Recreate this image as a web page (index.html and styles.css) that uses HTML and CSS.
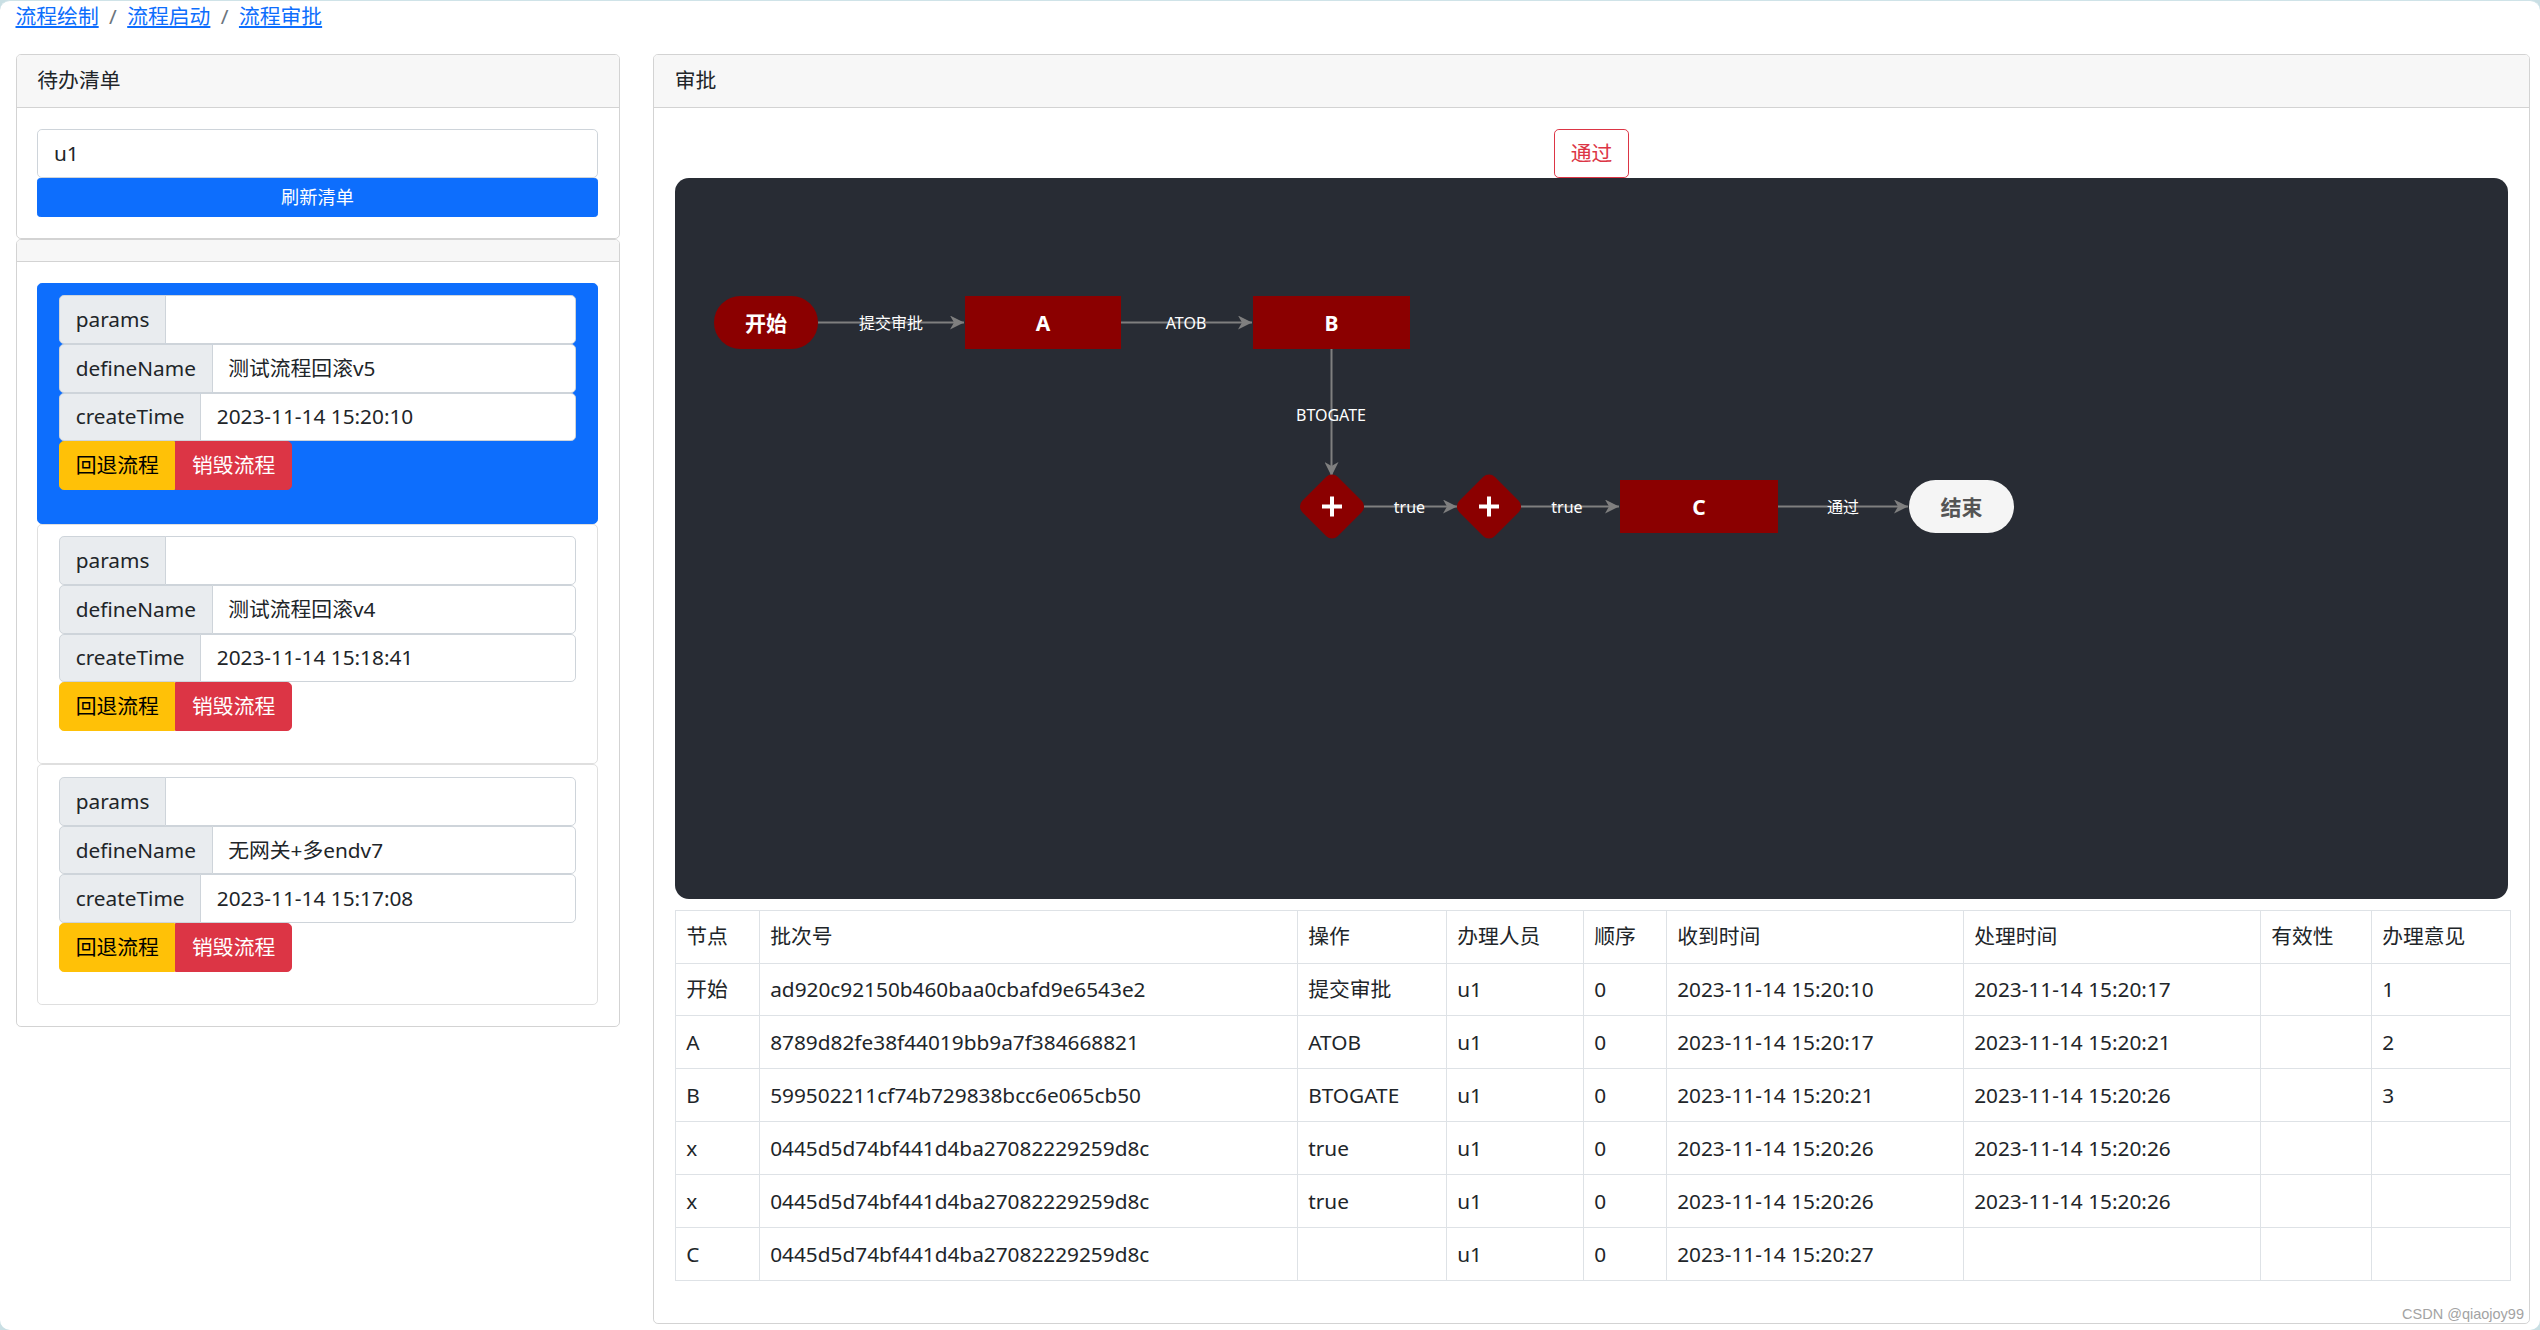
FILE: index.html
```html
<!DOCTYPE html>
<html lang="zh-CN">
<head>
<meta charset="utf-8">
<title>流程审批</title>
<link rel="stylesheet" href="styles.css">
</head>
<body>
<div class="window">
  <nav class="crumbs">
    <a href="#" class="crumb">流程绘制</a><span class="sep">/</span>
    <a href="#" class="crumb">流程启动</a><span class="sep">/</span>
    <a href="#" class="crumb">流程审批</a>
  </nav>
  <div class="layout">
    <aside class="side">
      <section class="card">
        <div class="card-header">待办清单</div>
        <div class="card-body">
          <div class="field">u1</div>
          <button class="btn-refresh">刷新清单</button>
        </div>
      </section>
      <section class="card">
        <div class="card-header empty"></div>
        <div class="card-body list">
          <div class="item active">
            <div class="igroup"><span class="ig-label">params</span><div class="ig-value"></div></div>
            <div class="igroup"><span class="ig-label">defineName</span><div class="ig-value">测试流程回滚v5</div></div>
            <div class="igroup"><span class="ig-label">createTime</span><div class="ig-value">2023-11-14 15:20:10</div></div>
            <div class="btns"><button class="btn warn">回退流程</button><button class="btn danger">销毁流程</button></div>
          </div>
          <div class="item">
            <div class="igroup"><span class="ig-label">params</span><div class="ig-value"></div></div>
            <div class="igroup"><span class="ig-label">defineName</span><div class="ig-value">测试流程回滚v4</div></div>
            <div class="igroup"><span class="ig-label">createTime</span><div class="ig-value">2023-11-14 15:18:41</div></div>
            <div class="btns"><button class="btn warn">回退流程</button><button class="btn danger">销毁流程</button></div>
          </div>
          <div class="item">
            <div class="igroup"><span class="ig-label">params</span><div class="ig-value"></div></div>
            <div class="igroup"><span class="ig-label">defineName</span><div class="ig-value">无网关+多endv7</div></div>
            <div class="igroup"><span class="ig-label">createTime</span><div class="ig-value">2023-11-14 15:17:08</div></div>
            <div class="btns"><button class="btn warn">回退流程</button><button class="btn danger">销毁流程</button></div>
          </div>
        </div>
      </section>
    </aside>
    <main class="card main">
      <div class="card-header">审批</div>
      <div class="card-body">
        <div class="center"><button class="btn-pass">通过</button></div>
        <div class="flow">
          <svg class="flow-svg" viewBox="0 0 1835 721" width="1835" height="721" xmlns="http://www.w3.org/2000/svg">
            <defs>
              <marker id="arr" viewBox="0 0 14 14" refX="14" refY="7" markerWidth="14" markerHeight="14" markerUnits="userSpaceOnUse" orient="auto">
                <path d="M0,0 L14,7 L0,14 L4,7 Z" fill="#7f7f7f"/>
              </marker>
            </defs>
            <g class="edges" stroke="#7f7f7f" stroke-width="2" fill="none">
              <line x1="143" y1="144.5" x2="289" y2="144.5" marker-end="url(#arr)"/>
              <line x1="446" y1="144.5" x2="577" y2="144.5" marker-end="url(#arr)"/>
              <line x1="656.5" y1="171" x2="656.5" y2="298" marker-end="url(#arr)"/>
              <line x1="689" y1="328.5" x2="782" y2="328.5" marker-end="url(#arr)"/>
              <line x1="846" y1="328.5" x2="944" y2="328.5" marker-end="url(#arr)"/>
              <line x1="1103" y1="328.5" x2="1233" y2="328.5" marker-end="url(#arr)"/>
            </g>
            <g class="elabels">
              <text x="216" y="144.5">提交审批</text>
              <text x="511" y="144.5">ATOB</text>
              <text x="656" y="237">BTOGATE</text>
              <text x="734.5" y="328.5">true</text>
              <text x="892" y="328.5">true</text>
              <text x="1168" y="328.5">通过</text>
            </g>
            <g class="nodes">
              <rect x="39" y="118" width="104" height="53" rx="26.5" fill="#8b0000"/>
              <rect x="290" y="118" width="156" height="53" fill="#8b0000"/>
              <rect x="578" y="118" width="157" height="53" fill="#8b0000"/>
              <rect x="-25" y="-25" width="50" height="50" rx="8" fill="#8b0000" transform="translate(657 328.5) rotate(45)"/>
              <rect x="-25" y="-25" width="50" height="50" rx="8" fill="#8b0000" transform="translate(814 328.5) rotate(45)"/>
              <rect x="945" y="302" width="158" height="53" fill="#8b0000"/>
              <rect x="1234" y="302" width="105" height="53" rx="26.5" fill="#f5f5f5"/>
              <path d="M647 328.5 H667 M657 318.5 V338.5 M804 328.5 H824 M814 318.5 V338.5" stroke="#fff" stroke-width="4"/>
            </g>
            <g class="ntext">
              <text x="91" y="145">开始</text>
              <text x="368" y="145">A</text>
              <text x="656.5" y="145">B</text>
              <text x="1024" y="329">C</text>
              <text x="1286.5" y="329" class="end-text">结束</text>
            </g>
          </svg>
        </div>
        <table class="grid">
          <colgroup>
            <col class="c1"><col class="c2"><col class="c3"><col class="c4"><col class="c5"><col class="c6"><col class="c7"><col class="c8"><col class="c9">
          </colgroup>
          <thead>
            <tr><th>节点</th><th>批次号</th><th>操作</th><th>办理人员</th><th>顺序</th><th>收到时间</th><th>处理时间</th><th>有效性</th><th>办理意见</th></tr>
          </thead>
          <tbody>
            <tr><td>开始</td><td>ad920c92150b460baa0cbafd9e6543e2</td><td>提交审批</td><td>u1</td><td>0</td><td>2023-11-14 15:20:10</td><td>2023-11-14 15:20:17</td><td></td><td>1</td></tr>
            <tr><td>A</td><td>8789d82fe38f44019bb9a7f384668821</td><td>ATOB</td><td>u1</td><td>0</td><td>2023-11-14 15:20:17</td><td>2023-11-14 15:20:21</td><td></td><td>2</td></tr>
            <tr><td>B</td><td>599502211cf74b729838bcc6e065cb50</td><td>BTOGATE</td><td>u1</td><td>0</td><td>2023-11-14 15:20:21</td><td>2023-11-14 15:20:26</td><td></td><td>3</td></tr>
            <tr><td>x</td><td>0445d5d74bf441d4ba27082229259d8c</td><td>true</td><td>u1</td><td>0</td><td>2023-11-14 15:20:26</td><td>2023-11-14 15:20:26</td><td></td><td></td></tr>
            <tr><td>x</td><td>0445d5d74bf441d4ba27082229259d8c</td><td>true</td><td>u1</td><td>0</td><td>2023-11-14 15:20:26</td><td>2023-11-14 15:20:26</td><td></td><td></td></tr>
            <tr><td>C</td><td>0445d5d74bf441d4ba27082229259d8c</td><td></td><td>u1</td><td>0</td><td>2023-11-14 15:20:27</td><td></td><td></td><td></td></tr>
          </tbody>
        </table>
      </div>
    </main>
  </div>
  <div class="watermark">CSDN @qiaojoy99</div>
</div>
</body>
</html>
```
FILE: styles.css
```css
html {
  background: #c9dfe4;
}
body {
  margin: 0;
  font-family: "Noto Sans", "Noto Sans CJK SC", sans-serif;
  font-size: 20.8px;
  line-height: 1.5;
  color: #212529;
}
.window {
  position: relative;
  height: 1330px;
  box-sizing: border-box;
  background: #fff;
  border-top: 1px solid #cfe3e8;
  border-radius: 10px;
  overflow: hidden;
  padding: 0 10px 0 15.5px;
}
.crumbs {
  display: flex;
  align-items: center;
  height: 31.2px;
  margin: 0 0 21.8px 0;
}
.crumb {
  color: #0d6efd;
  text-decoration: underline;
}
.sep {
  color: #6c757d;
  padding: 0 10.4px;
}
.layout {
  display: grid;
  grid-template-columns: 604px 1877px;
  column-gap: 33.5px;
  align-items: start;
}
.side {
  display: flex;
  flex-direction: column;
}
.card {
  border: 1px solid #d3d3d3;
  border-radius: 4.9px;
  background: #fff;
  overflow: hidden;
}
.card-header {
  background: #f7f7f7;
  border-bottom: 1px solid #d3d3d3;
  padding: 10.4px 20.8px;
}
.card-header.empty {
  height: 0;
}
.card-body {
  padding: 20.8px;
}
.field {
  border: 1px solid #ced4da;
  border-radius: 4.9px;
  padding: 7.8px 15.6px;
  background: #fff;
}
.btn-refresh {
  display: block;
  width: 100%;
  border: 1px solid #0d6efd;
  background: #0d6efd;
  color: #fff;
  font-family: inherit;
  font-size: 18.2px;
  line-height: 1.5;
  padding: 5.2px 10.4px;
  border-radius: 3.25px;
}
.list {
  display: flex;
  flex-direction: column;
}
.item {
  border: 1px solid #dfdfdf;
  border-radius: 4.9px;
  padding: 11.5px 20.8px;
  background: #fff;
}
.item.active {
  background: #0d6efd;
  border-color: #0d6efd;
}
.igroup {
  display: flex;
}
.ig-label {
  background: #e9ecef;
  border: 1px solid #ced4da;
  border-radius: 4.9px 0 0 4.9px;
  padding: 7.8px 15.6px;
  white-space: nowrap;
}
.ig-value {
  flex: 1;
  margin-left: -1px;
  background: #fff;
  border: 1px solid #ced4da;
  border-radius: 0 4.9px 4.9px 0;
  padding: 7.8px 15.6px;
  min-height: 31.2px;
}
.btns {
  display: flex;
  margin-bottom: 20.8px;
}
.btn {
  font-family: inherit;
  font-size: 20.8px;
  line-height: 1.5;
  padding: 7.8px 15.6px;
  border: 1px solid transparent;
}
.btn.warn {
  background: #ffc107;
  border-color: #ffc107;
  color: #000;
  border-radius: 4.9px 0 0 4.9px;
}
.btn.danger {
  background: #dc3545;
  border-color: #dc3545;
  color: #fff;
  border-radius: 0 4.9px 4.9px 0;
}
.center {
  text-align: center;
}
.btn-pass {
  font-family: inherit;
  font-size: 20.8px;
  line-height: 1.5;
  padding: 7.8px 15.6px;
  border: 1px solid #dc3545;
  color: #dc3545;
  background: #fff;
  border-radius: 4.9px;
}
.flow {
  height: 721px;
  background: #282c34;
  border-radius: 14px;
  margin-top: 0.5px;
  overflow: hidden;
}
.flow-svg {
  display: block;
}
.elabels text {
  fill: #fff;
  font-size: 16px;
  text-anchor: middle;
  dominant-baseline: central;
  font-family: "Noto Sans", "Noto Sans CJK SC", sans-serif;
}
.ntext text {
  fill: #fff;
  font-size: 21px;
  font-weight: 700;
  text-anchor: middle;
  dominant-baseline: central;
  font-family: "Noto Sans", "Noto Sans CJK SC", sans-serif;
}
.ntext .end-text {
  fill: #555;
}
.grid {
  width: 100%;
  table-layout: fixed;
  border-collapse: collapse;
  margin-top: 10.5px;
  margin-bottom: 20.8px;
}
.grid th,
.grid td {
  border: 1px solid #dee2e6;
  padding: 10.4px;
  text-align: left;
  font-weight: 400;
  white-space: nowrap;
  overflow: hidden;
  height: 31.2px;
}
.c1 { width: 84px; }
.c2 { width: 538px; }
.c3 { width: 149px; }
.c4 { width: 137px; }
.c5 { width: 83px; }
.c6 { width: 297px; }
.c7 { width: 297px; }
.c8 { width: 111px; }
.c9 { width: 139px; }
.watermark {
  position: absolute;
  right: 16px;
  bottom: 9px;
  font-family: "Liberation Sans", sans-serif;
  font-size: 14.5px;
  line-height: 1;
  color: #a3a3a3;
}
```
